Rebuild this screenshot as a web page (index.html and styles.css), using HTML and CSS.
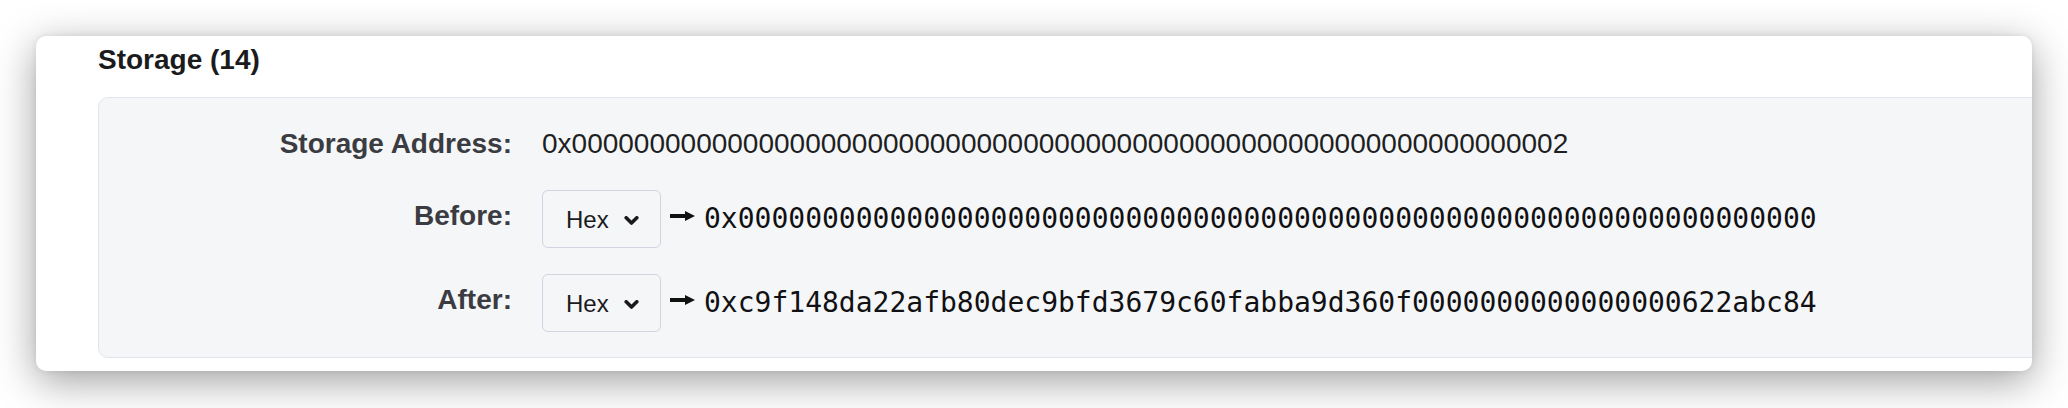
FILE: index.html
```html
<!DOCTYPE html>
<html lang="en">
<head>
<meta charset="utf-8">
<title>Storage</title>
<link rel="stylesheet" href="styles.css">
</head>
<body>
<div class="card">
  <h2 class="title">Storage (14)</h2>
  <div class="panel">
    <div class="grid">
      <div class="lbl">Storage Address:</div>
      <div class="addr">0x0000000000000000000000000000000000000000000000000000000000000002</div>

      <div class="lbl lbl-ctl">Before:</div>
      <div class="val">
        <div class="select"><span>Hex</span>
          <svg class="chev" width="15" height="9" viewBox="0 0 15 9"><path d="M2.2 1.8 L7.5 7 L12.8 1.8" fill="none" stroke="#1a1a1a" stroke-width="3.6" stroke-linecap="round" stroke-linejoin="round"/></svg>
        </div>
        <svg class="arrow" width="25" height="10" viewBox="0 0 25 10"><rect x="0" y="3" width="16" height="4" fill="#111"/><path d="M15 0 L25 5 L15 10 Z" fill="#111"/></svg>
        <span class="mono">0x0000000000000000000000000000000000000000000000000000000000000000</span>
      </div>

      <div class="lbl lbl-ctl">After:</div>
      <div class="val">
        <div class="select"><span>Hex</span>
          <svg class="chev" width="15" height="9" viewBox="0 0 15 9"><path d="M2.2 1.8 L7.5 7 L12.8 1.8" fill="none" stroke="#1a1a1a" stroke-width="3.6" stroke-linecap="round" stroke-linejoin="round"/></svg>
        </div>
        <svg class="arrow" width="25" height="10" viewBox="0 0 25 10"><rect x="0" y="3" width="16" height="4" fill="#111"/><path d="M15 0 L25 5 L15 10 Z" fill="#111"/></svg>
        <span class="mono">0xc9f148da22afb80dec9bfd3679c60fabba9d360f0000000000000000622abc84</span>
      </div>
    </div>
  </div>
</div>
</body>
</html>
```

FILE: styles.css
```css
html, body {
  margin: 0;
  padding: 0;
  background: #ffffff;
}
body {
  padding: 36px 36px 37px 36px;
  min-height: 408px;
  box-sizing: border-box;
  font-family: "Liberation Sans", Arial, sans-serif;
}
.card {
  background: #ffffff;
  border-radius: 10px;
  box-shadow: 0 10px 42px rgba(0, 0, 0, 0.38), 0 0 6px rgba(0, 0, 0, 0.08);
  overflow: hidden;
  padding: 8px 0 13px 62px;
  height: 335px;
  box-sizing: border-box;
}
.title {
  margin: 0;
  font-size: 28px;
  line-height: 32px;
  font-weight: 700;
  color: #1b1b1d;
}
.panel {
  margin-top: 21px;
  margin-right: -60px;
  background: #f5f6f8;
  border: 1px solid #e2e3ee;
  border-radius: 10px;
  padding: 26px 0 25px 0;
}
.grid {
  display: grid;
  grid-template-columns: 413px 1fr;
  column-gap: 30px;
  row-gap: 26px;
  align-items: center;
}
.lbl {
  text-align: right;
  font-size: 28px;
  line-height: 40px;
  font-weight: 700;
  color: #3a3c42;
}
.lbl-ctl {
  padding-bottom: 7px;
}
.addr {
  font-size: 28px;
  line-height: 40px;
  color: #1e1f22;
  white-space: nowrap;
}
.val {
  display: flex;
  align-items: center;
  white-space: nowrap;
}
.select {
  box-sizing: border-box;
  width: 119px;
  height: 58px;
  border: 1.5px solid #cfd4de;
  border-radius: 6px;
  display: flex;
  align-items: center;
  justify-content: space-between;
  padding: 2px 21px 0 23px;
  font-size: 24px;
  line-height: 1;
  color: #1b1b1d;
}
.chev {
  display: block;
}
.arrow {
  display: block;
  margin: 0 9px 0 9px;
  position: relative;
  top: -3px;
}
.mono {
  font-family: "DejaVu Sans Mono", "Liberation Mono", monospace;
  font-size: 28px;
  line-height: 40px;
  color: #111113;
}
```
